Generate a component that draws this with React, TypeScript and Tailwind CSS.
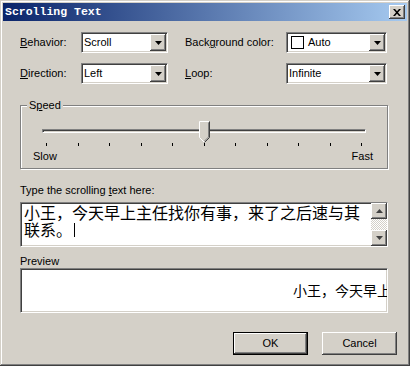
import React from "react";

const sunken =
  "border border-t-[#808080] border-l-[#808080] border-b-white border-r-white shadow-[inset_1px_1px_#404040,inset_-1px_-1px_#d4d0c8]";
const raised =
  "bg-[#d4d0c8] shadow-[inset_-1px_-1px_#404040,inset_1px_1px_#fff,inset_-2px_-2px_#808080,inset_2px_2px_#d4d0c8]";

function DownTri({ color = "#000" }: { color?: string }) {
  return (
    <svg width="7" height="4" viewBox="0 0 7 4">
      <path d="M0 0H7L3.5 4Z" fill={color} />
    </svg>
  );
}

function Combo({ className, children }: { className: string; children: React.ReactNode }) {
  return (
    <div className={`flex h-[21px] items-center bg-white ${sunken} ${className}`}>
      <div className="flex h-full flex-1 items-center gap-[4px] pl-[2px] overflow-hidden whitespace-nowrap">
        {children}
      </div>
      <div className={`flex h-[17px] w-[16px] mr-[1px] items-center justify-center ${raised}`}>
        <DownTri />
      </div>
    </div>
  );
}

export default function App() {
  const ticks = Array.from({ length: 11 });
  return (
    <div
      className="flex h-[366px] w-[410px] flex-col bg-[#d4d0c8] p-[3px] text-[11px] text-black shadow-[inset_-1px_-1px_#404040,inset_1px_1px_#d4d0c8,inset_-2px_-2px_#808080,inset_2px_2px_#fff]"
      style={{ fontFamily: '"Liberation Sans", Arial, sans-serif' }}
    >
      {/* Title bar */}
      <div className="flex h-[18px] items-center justify-between bg-[linear-gradient(to_right,#0a246a,#a6caf0)] pl-[2px] pr-[2px]">
        <span
          className="text-[11.5px] font-bold leading-none text-white"
          style={{ fontFamily: '"Liberation Mono", "Courier New", monospace' }}
        >
          Scrolling Text
        </span>
        <div className={`flex h-[14px] w-[16px] items-center justify-center ${raised}`}>
          <svg width="8" height="7" viewBox="0 0 8 7">
            <path d="M0 0h2l2 2.2L6 0h2L5 3.5 8 7H6L4 4.8 2 7H0l3-3.5Z" fill="#000" />
          </svg>
        </div>
      </div>

      <div className="flex flex-1 flex-col pl-[17px] pr-[19px]">
        {/* Row 1 */}
        <div className="mt-[11px] flex h-[21px] items-center">
          <span className="w-[61px]">
            <u>B</u>ehavior:
          </span>
          <Combo className="w-[87px]">
            <span>Scroll</span>
          </Combo>
          <span className="ml-[17px] w-[101px]">
            Back<u>g</u>round color:
          </span>
          <Combo className="w-[101px]">
            <span className="ml-[2px] inline-block h-[13px] w-[13px] border border-black bg-white" />
            <span>Auto</span>
          </Combo>
        </div>

        {/* Row 2 */}
        <div className="mt-[10px] flex h-[21px] items-center">
          <span className="w-[61px]">
            <u>D</u>irection:
          </span>
          <Combo className="w-[87px]">
            <span>Left</span>
          </Combo>
          <span className="ml-[17px] w-[101px]">
            <u>L</u>oop:
          </span>
          <Combo className="w-[101px]">
            <span>Infinite</span>
          </Combo>
        </div>

        {/* Speed group */}
        <div className="relative mt-[21px] h-[64px] border border-[#808080] shadow-[inset_1px_1px_#fff,1px_1px_#fff]">
          <span className="absolute left-[6px] top-[-8px] bg-[#d4d0c8] px-[2px] leading-[14px]">
            S<u>p</u>eed
          </span>
          <div className="relative mx-[21px] mt-[23px] h-[4px] border border-t-[#808080] border-l-[#808080] border-b-white border-r-white bg-[#d4d0c8] shadow-[inset_1px_1px_#404040]">
            <svg
              className="absolute left-[156px] top-[-9px]"
              width="11"
              height="22"
              viewBox="0 0 11 22"
            >
              <path d="M0.5 16.5V0.5H10.5V16.5L5.5 21.5Z" fill="#d4d0c8" />
              <path d="M0.5 16.5V0.5H10" stroke="#fff" fill="none" />
              <path d="M0.5 16.5L5.5 21.5" stroke="#fff" fill="none" />
              <path d="M10.5 0.5V16.5L5.5 21.5" stroke="#404040" fill="none" />
              <path d="M9.5 1.5V16L5.5 20" stroke="#808080" fill="none" />
            </svg>
          </div>
          <div className="mx-[25px] mt-[10px] flex justify-between">
            {ticks.map((_, i) => (
              <span key={i} className="h-[3px] w-[1px] bg-black" />
            ))}
          </div>
          <div className="ml-[12px] mr-[14px] mt-[4px] flex justify-between leading-[13px]">
            <span>Slow</span>
            <span>Fast</span>
          </div>
        </div>

        {/* Text entry */}
        <div className="mt-[14px] leading-[14px]">
          Type the scrolling <u>t</u>ext here:
        </div>
        <div className={`mt-[5px] flex h-[45px] bg-white ${sunken}`}>
          <div
            className="flex-1 pl-[3px] pt-[1px] text-[16px] leading-[17px]"
            style={{ fontFamily: '"Noto Sans CJK SC", "Noto Sans", sans-serif' }}
          >
            <div className="whitespace-nowrap">小王，今天早上主任找你有事，来了之后速与其</div>
            <div className="flex items-center whitespace-nowrap">
              联系。
              <span className="ml-[2px] inline-block h-[14px] w-[1px] bg-black" />
            </div>
          </div>
          <div className="flex w-[16px] flex-col">
            <div className={`flex h-[16px] items-center justify-center ${raised}`}>
              <svg width="7" height="4" viewBox="0 0 7 4">
                <path d="M0 4H7L3.5 0Z" fill="#404040" />
              </svg>
            </div>
            <div className="flex-1 bg-[image:repeating-conic-gradient(#fff_0_25%,#d4d0c8_0_50%)] bg-[length:2px_2px]" />
            <div className={`flex h-[16px] items-center justify-center ${raised}`}>
              <DownTri color="#404040" />
            </div>
          </div>
        </div>

        {/* Preview */}
        <div className="mt-[7px] leading-[14px]">Preview</div>
        <div className={`flex h-[45px] items-center overflow-hidden bg-white ${sunken}`}>
          <div
            className="whitespace-nowrap pl-[272px] text-[14px] leading-[17px]"
            style={{ fontFamily: '"Noto Sans CJK SC", "Noto Sans", sans-serif' }}
          >
            小王，今天早上主任找你有事
          </div>
        </div>

        {/* Buttons */}
        <div className="-mr-[9px] mt-[19px] flex justify-end gap-[14px]">
          <div className="flex h-[23px] w-[75px] border border-black">
            <div className={`flex flex-1 items-center justify-center ${raised}`}>OK</div>
          </div>
          <div className={`flex h-[23px] w-[75px] items-center justify-center ${raised}`}>Cancel</div>
        </div>
      </div>
    </div>
  );
}
